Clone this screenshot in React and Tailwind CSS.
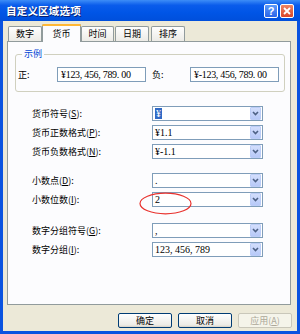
import React from "react";

const Chevron = () => (
  <svg width="9" height="9" viewBox="0 0 9 9">
    <path d="M2 3 L4.5 5.5 L7 3" fill="none" stroke="#4D6185" strokeWidth="1.6" />
  </svg>
);

function Combo({ value, selected }) {
  return (
    <div className="w-[111px] h-[15px] border border-[#7F9DB9] bg-white flex items-center justify-between">
      <div className="pl-[2px] flex items-center h-full">
        {selected ? (
          <span className="bg-[#316AC5] text-white px-[1px] leading-[11px] text-[10px] font-['Liberation_Serif',serif]">{value}</span>
        ) : (
          <span className="text-[10px] leading-[11px] text-black font-['Liberation_Serif',serif]">{value}</span>
        )}
      </div>
      <div className="w-[11px] h-[13px] mr-[1px] rounded-[1px] border border-[#BCCDF7] bg-[linear-gradient(to_bottom,#D3DEFC,#B7C9F8)] flex items-center justify-center">
        <Chevron />
      </div>
    </div>
  );
}

function Row({ label, acc, value, selected }) {
  return (
    <div className="flex items-center h-[15px]">
      <div className="w-[120px] text-[9px] leading-[10px] text-black whitespace-nowrap">
        {label}(<u>{acc}</u>):
      </div>
      <Combo value={value} selected={selected} />
    </div>
  );
}

function Tab({ children, w, ml, selected }) {
  if (selected) {
    return (
      <div
        className={`${w} ${ml} h-[18px] relative z-10 -mb-[1px] bg-[#FCFCFE] border border-[#919B9C] border-b-0 rounded-t-[2px] flex flex-col`}
      >
        <div className="h-[2px] bg-[#FFB733] -mx-[1px] -mt-[1px] rounded-t-[2px]" />
        <div className="flex-1 flex items-center justify-center text-[9px] text-black">{children}</div>
      </div>
    );
  }
  return (
    <div
      className={`${w} ${ml} h-[15px] bg-[linear-gradient(to_bottom,#FEFEFE,#ECEBE6)] border border-[#919B9C] border-b-0 rounded-t-[2px] flex items-center justify-center text-[9px] text-black`}
    >
      {children}
    </div>
  );
}

function XPButton({ children, disabled }) {
  return (
    <div
      className={`w-[54px] h-[15px] rounded-[2px] border flex items-center justify-center text-[9px] ${
        disabled
          ? "border-[#C9C7BA] bg-[#F5F4EA] text-[#ACA899]"
          : "border-[#003C74] bg-[linear-gradient(to_bottom,#FFFFFF,#ECEBE6_85%,#D6D0C5)] text-black"
      }`}
    >
      {children}
    </div>
  );
}

export default function App() {
  return (
    <div className="w-[300px] h-[334px] bg-[#0A53E0] flex flex-col font-['Noto_Sans_CJK_SC',sans-serif] overflow-hidden">
      {/* Title bar */}
      <div className="h-[21px] shrink-0 bg-[linear-gradient(to_bottom,#3D8DF7_0%,#0A5CEB_25%,#0055E6_60%,#004FDB_100%)] flex items-center justify-between pl-[6px] pr-[6px]">
        <span className="text-white font-bold text-[10.5px] leading-[12px] tracking-[0.2px] [text-shadow:1px_1px_0_#0A1E6E]">
          自定义区域选项
        </span>
        <div className="flex items-center gap-[2px] mt-[1px]">
          <div className="w-[14px] h-[14px] rounded-[2px] border border-white bg-[linear-gradient(to_bottom,#5C9BFB,#2A64E8)] flex items-center justify-center text-white font-bold text-[11px] leading-none font-['Liberation_Sans',sans-serif]">
            ?
          </div>
          <div className="w-[14px] h-[14px] rounded-[2px] border border-white bg-[linear-gradient(to_bottom,#EE8563,#D8452A)] flex items-center justify-center">
            <svg width="8" height="8" viewBox="0 0 8 8">
              <path d="M1 1 L7 7 M7 1 L1 7" stroke="white" strokeWidth="1.8" />
            </svg>
          </div>
        </div>
      </div>

      {/* Body */}
      <div className="flex-1 mx-[3px] mb-[3px] bg-[#ECE9D8] flex flex-col">
        {/* Tabs */}
        <div className="flex items-end pl-[5px] pt-[2px] h-[20px]">
          <Tab w="w-[34px]" ml="ml-0">数字</Tab>
          <Tab w="w-[39px]" ml="ml-0" selected>货币</Tab>
          <Tab w="w-[33px]" ml="ml-0">时间</Tab>
          <Tab w="w-[34px]" ml="ml-[1px]">日期</Tab>
          <Tab w="w-[34px]" ml="ml-[2px]">排序</Tab>
        </div>

        {/* Panel */}
        <div className="ml-[4px] w-[284px] h-[264px] border border-[#919B9C] bg-[#FCFCFE] relative flex flex-col">
          <fieldset className="ml-[7px] w-[270px] mt-[6px] border border-[#D0D0BF] rounded-[3px] pl-[2px] pt-[7px] pb-[9px]">
            <legend className="ml-[4px] px-[2px] text-[9px] leading-[12px] text-[#0046D5]">示例</legend>
            <div className="flex items-center">
              <div className="w-[39px] text-[9px] text-black">正:</div>
              <div className="w-[89px] h-[15px] border border-[#7F9DB9] bg-white flex items-center pl-[3px] text-[10px] font-['Liberation_Serif',serif] tracking-[-0.3px] text-black whitespace-nowrap">
                ¥123, 456, 789. 00
              </div>
              <div className="w-[38px] ml-[6px] text-[9px] text-black">负:</div>
              <div className="w-[89px] h-[15px] border border-[#7F9DB9] bg-white flex items-center pl-[3px] text-[10px] font-['Liberation_Serif',serif] tracking-[-0.3px] text-black whitespace-nowrap">
                ¥-123, 456, 789. 00
              </div>
            </div>
          </fieldset>

          <div className="pl-[24px] mt-[14px] flex flex-col gap-[4px]">
            <Row label="货币符号" acc="S" value="¥" selected />
            <Row label="货币正数格式" acc="P" value="¥1.1" />
            <Row label="货币负数格式" acc="N" value="¥-1.1" />
          </div>
          <div className="pl-[24px] mt-[14px] flex flex-col gap-[4px]">
            <Row label="小数点" acc="D" value="." />
            <Row label="小数位数" acc="I" value="2" />
          </div>
          <div className="pl-[24px] mt-[16px] flex flex-col gap-[4px]">
            <Row label="数字分组符号" acc="G" value="," />
            <Row label="数字分组" acc="I" value="123, 456, 789" />
          </div>

          {/* red annotation ellipse */}
          <svg className="absolute left-[131px] top-[150px]" width="53" height="23" viewBox="0 0 53 23">
            <ellipse cx="26.5" cy="11.5" rx="25.5" ry="10.3" fill="none" stroke="#E8322E" strokeWidth="1.2" />
          </svg>
        </div>

        {/* Buttons */}
        <div className="flex justify-end gap-[6px] pr-[5px] mt-[8px]">
          <XPButton>确定</XPButton>
          <XPButton>取消</XPButton>
          <XPButton disabled>
            应用(<u>A</u>)
          </XPButton>
        </div>
      </div>
    </div>
  );
}
